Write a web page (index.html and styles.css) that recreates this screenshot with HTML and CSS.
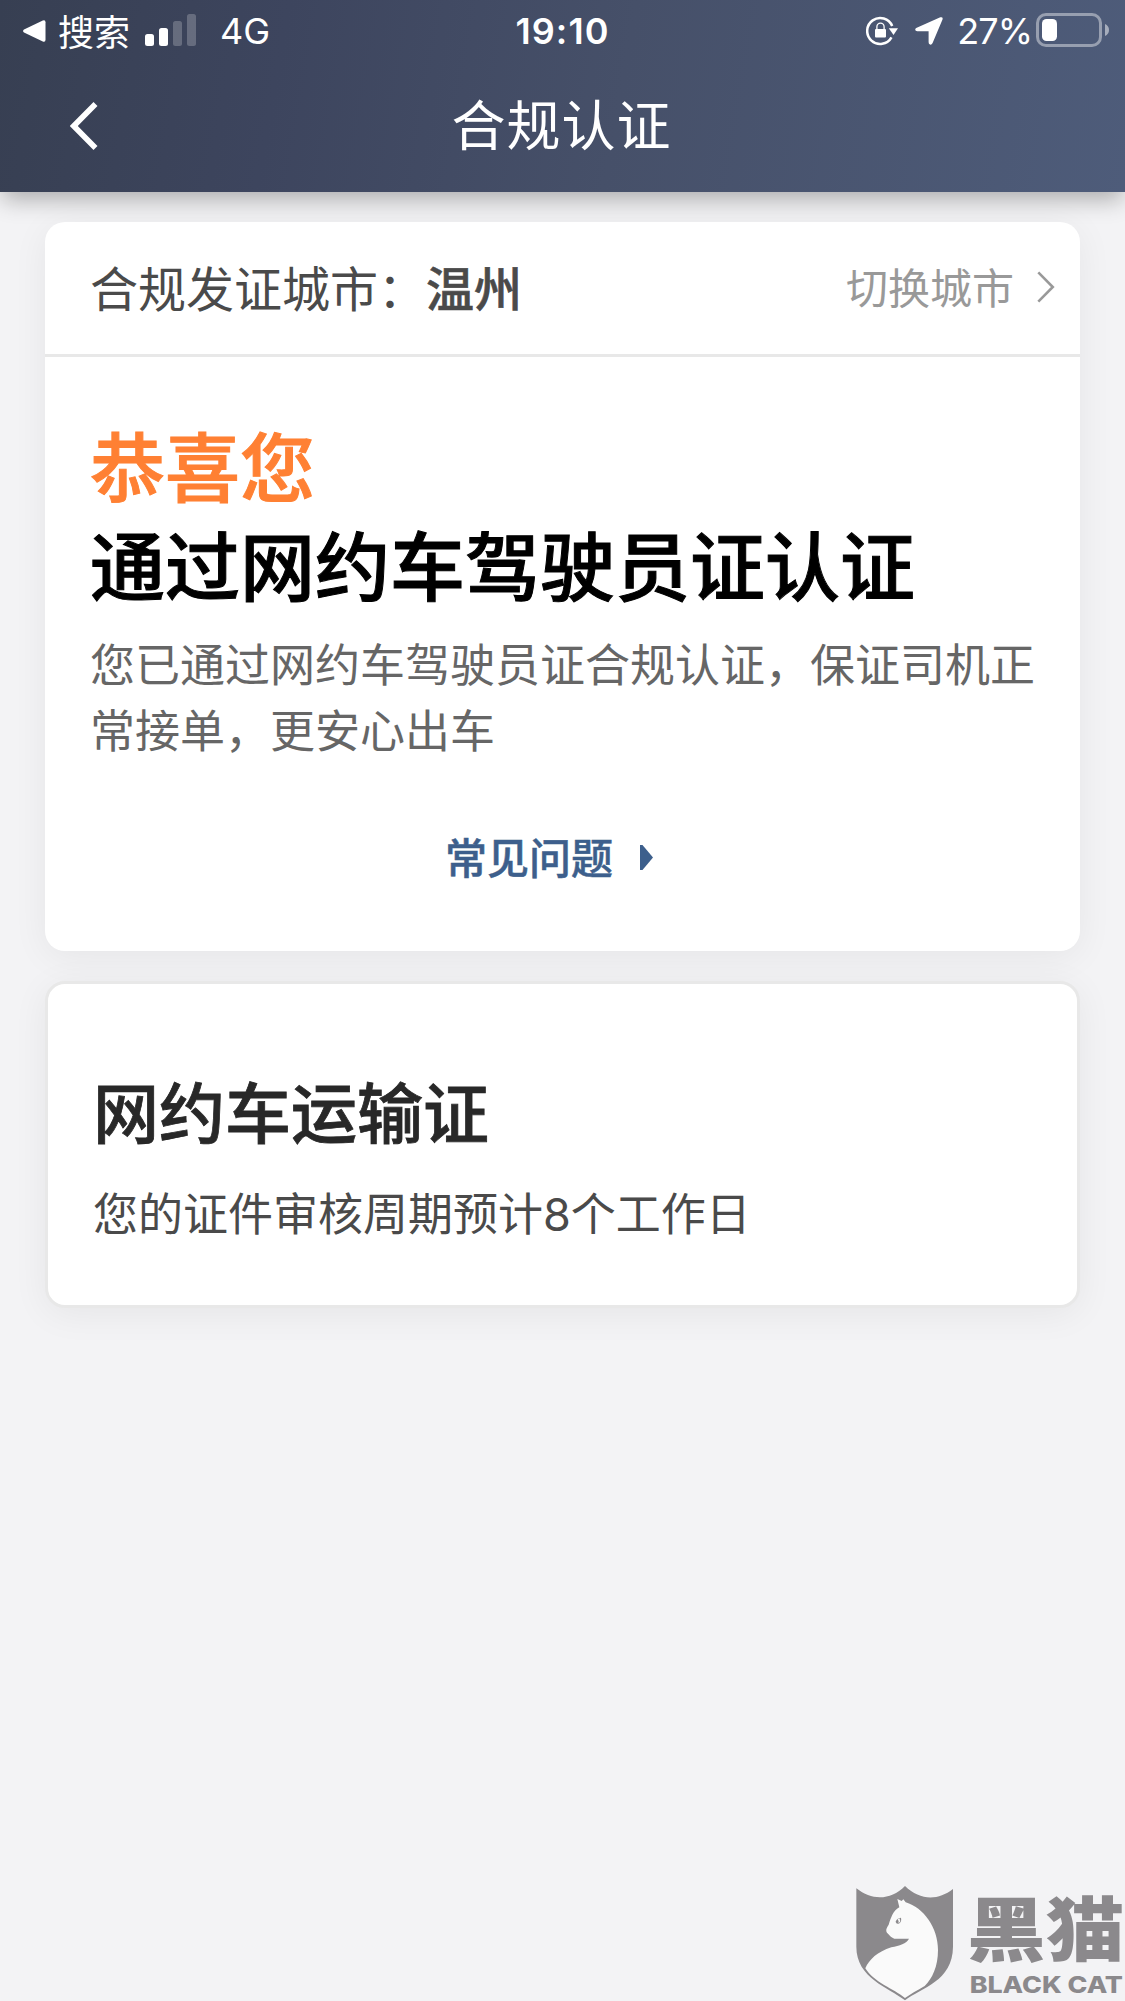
FILE: index.html
```html
<!DOCTYPE html>
<html lang="zh-CN">
<head>
<meta charset="utf-8">
<title>合规认证</title>
<link rel="stylesheet" href="styles.css">
</head>
<body>
<div class="screen">
  <header class="header">
    <div class="status">
      <div class="status-left">
        <svg class="return" width="23" height="22" viewBox="0 0 23 22"><path d="M1 9.6 19.8.4Q22.5-.6 22.5 2.2v17.6q0 2.8-2.7 1.8L1 12.4Q-.9 11 1 9.6Z" fill="#fff"/></svg>
        <span class="search">搜索</span>
        <svg class="signal" width="51" height="32" viewBox="0 0 51 32" fill="#fff"><rect y="20" width="9" height="12" rx="2.5"/><rect x="14" y="14" width="9" height="18" rx="2.5"/><g opacity=".22"><rect x="28" y="7" width="9" height="25" rx="2.5"/><rect x="42" width="9" height="32" rx="2.5"/></g></svg>
        <span class="network">4G</span>
      </div>
      <time class="time">19:10</time>
      <div class="status-right">
        <svg width="32" height="30" viewBox="0 0 32 30"><path d="M26.2 10A13 13 0 1 0 25.5 21.4" fill="none" stroke="#fff" stroke-width="2.5"/><path d="M22.8 12.3h9.2l-4.5 6.6Z" fill="#fff"/><rect x="9" y="13" width="11" height="8.5" rx="1" fill="#fff"/><path d="M10.9 13.5v-2.8a3.6 3.6 0 0 1 7.2 0v2.8" fill="none" stroke="#fff" stroke-width="1.3"/></svg>
        <svg class="location" width="28" height="28" viewBox="0 0 28 28"><path d="M1.2 11.1 25.3.3Q28.3-.4 27.5 2.6L17.6 26q-1 2-2.6 1.6-1.4-.5-1.4-2.4V14.3H2.3Q.2 14.1.2 12.6q0-1 1-1.5Z" fill="#fff"/></svg>
        <span class="percent">27%</span>
        <svg class="battery" width="73" height="34" viewBox="0 0 73 34"><rect x="1.5" y="1.5" width="63" height="31" rx="8.5" fill="none" stroke="#fff" stroke-opacity=".42" stroke-width="3"/><rect x="6" y="6" width="15" height="22" rx="4.5" fill="#fff"/><path d="M69 11q4 1.8 4 6t-4 6Z" fill="#fff" opacity=".5"/></svg>
      </div>
    </div>
    <nav class="nav">
      <svg class="back" width="28" height="48" viewBox="0 0 28 48"><path d="M25.5 2 3.8 24l21.7 22" fill="none" stroke="#fff" stroke-width="5.6"/></svg>
      <h1 class="nav-title">合规认证</h1>
    </nav>
  </header>
  <main class="content">
    <section class="card">
      <div class="city-row">
        <p class="city">合规发证城市：<strong class="city-name">温州</strong></p>
        <a class="switch">切换城市<svg width="18" height="32" viewBox="0 0 18 32"><path d="M1.3 1.3 15.8 16 1.3 30.7" fill="none" stroke="#999" stroke-width="2.6"/></svg></a>
      </div>
      <div class="result">
        <h2 class="headline"><span class="congrats">恭喜您</span><br>通过网约车驾驶员证认证</h2>
        <p class="detail">您已通过网约车驾驶员证合规认证，保证司机正常接单，更安心出车</p>
        <a class="faq">常见问题<svg width="13" height="25" viewBox="0 0 13 25"><path d="M0 0h2.5L13 12.5 2.5 25H0Z" fill="#3d5f8c"/></svg></a>
      </div>
    </section>
    <section class="card permit">
      <h2 class="permit-title">网约车运输证</h2>
      <p class="permit-detail">您的证件审核周期预计<span class="days">8</span>个工作日</p>
    </section>
  </main>
  <svg class="watermark" width="280" height="126" viewBox="0 0 840 378">
    <path d="M34 40C82 78 137 76 180 33C224 76 278 78 324 42V215C323 320 229 337 180 376C131 337 34 310 34 215Z" fill="#8b898c"/>
    <path d="M163 97 157 72 170 78 175 73 182 82C236 98 279 158 279 225C279 275 262 310 239 333C216 346 198 357 180 369C146 341 87 323 61 280C72 254 98 230 139 217C164 211 184 207 192 191C174 192 161 191 148 191C137 187 134 180 126 173C121 164 126 157 131 149C138 129 143 108 163 97Z" fill="#fafafa"/>
    <path d="M152 140Q155 130 168 128Q171 142 160 146Q153 147 152 140Z" fill="#8b898c"/><path d="M158 133q5 6 2 11l5-3q2-5-2-11Z" fill="#fafafa"/>
    <text class="wm-cn" x="366" y="243" textLength="472" lengthAdjust="spacingAndGlyphs">黑猫</text>
    <text class="wm-en" x="374" y="355" textLength="460" lengthAdjust="spacingAndGlyphs">BLACK CAT</text>
  </svg>
</div>
</body>
</html>
```
FILE: styles.css
```css
* { box-sizing: border-box; }
body, h1, h2, p { margin: 0; }
body {
  background: #f3f3f5;
  font-family: "Noto Sans CJK SC", sans-serif;
}
svg { display: block; flex: none; }
.screen {
  position: relative;
  width: 1125px;
  height: 2001px;
  overflow: hidden;
}
.header {
  height: 192px;
  color: #fff;
  background: linear-gradient(100deg, #373f52 0%, #3d455e 25%, #465069 55%, #4e5c7a 100%);
  box-shadow: 0 9px 22px -2px rgba(0, 0, 0, .3);
}
.status {
  display: grid;
  grid-template-columns: 1fr auto 1fr;
  align-items: center;
  height: 62px;
  padding: 0 16px 0 23px;
}
.status-left, .status-right { display: flex; align-items: center; }
.status-right { justify-content: flex-end; }
.search {
  margin: -3px 0 0 12px;
  font-size: 36px;
  font-weight: 400;
  line-height: 58px;
}
.signal { margin: -2px 0 0 15px; }
.network, .time, .percent {
  font-family: Inter, sans-serif;
  font-size: 36px;
  line-height: 62px;
}
.network { margin-left: 24px; }
.time {
  margin-right: 7px;
  font-weight: 600;
  letter-spacing: 1.1px;
}
.location { margin: -1px 14px 0 17px; }
.percent { letter-spacing: -1px; }
.battery { margin: -2px 0 0 4px; }
.nav {
  display: grid;
  grid-template-columns: 60px 1fr 60px;
  align-items: center;
  height: 130px;
  padding: 0 69px 0 67px;
}
.back { margin: 0 0 8px 3px; }
.nav-title {
  height: 136px;
  font-size: 54px;
  font-weight: 400;
  line-height: 122px;
  letter-spacing: 1px;
  text-align: center;
}
.content {
  display: flex;
  flex-direction: column;
  gap: 31px;
  padding: 30px 45px;
}
.card {
  background: #fff;
  border-radius: 20px;
  box-shadow: 0 6px 36px rgba(0, 0, 0, .06);
}
.city-row {
  display: flex;
  justify-content: space-between;
  height: 135px;
  padding: 0 25px 0 45px;
  border-bottom: 3px solid #e8e8e8;
}
.city {
  color: #4a4a4a;
  font-size: 48px;
  font-weight: 400;
  line-height: 129px;
}
.city-name {
  font-weight: 500;
  -webkit-text-stroke: .6px;
}
.switch {
  display: flex;
  align-items: center;
  gap: 23px;
  height: 128px;
  color: #999;
  font-size: 42px;
  font-weight: 400;
  line-height: 60px;
}
.switch svg { margin-top: 2px; }
.result {
  height: 594px;
  padding: 57px 45px 0;
}
.headline {
  color: #000;
  font-size: 75px;
  font-weight: 500;
  line-height: 99px;
  -webkit-text-stroke: 1px;
}
.congrats { color: #ff8033; }
.detail {
  margin-top: 18px;
  color: #666;
  font-size: 45px;
  font-weight: 400;
  line-height: 66px;
}
.faq {
  display: flex;
  justify-content: center;
  align-items: center;
  gap: 27px;
  height: 60px;
  margin-top: 63px;
  padding-right: 27px;
  color: #3d5f8c;
  font-size: 42px;
  font-weight: 500;
  -webkit-text-stroke: .5px;
}
.faq svg { margin-top: 5px; }
.permit {
  height: 327px;
  margin-top: -1px;
  padding: 75px 45px 0;
  border: 3px solid #e8e8e8;
}
.permit-title {
  color: #282828;
  font-size: 66px;
  font-weight: 500;
  line-height: 100px;
  -webkit-text-stroke: .8px;
}
.permit-detail {
  margin-top: 20px;
  color: #4a4a4a;
  font-size: 45px;
  font-weight: 400;
  line-height: 66px;
}
.days {
  font-family: Inter, sans-serif;
  font-weight: 400;
}
.watermark {
  position: absolute;
  right: 0;
  bottom: 0;
  overflow: visible;
  fill: #8b898c;
}
.wm-cn { font-size: 212px; font-weight: 900; }
.wm-en {
  font-family: Inter, sans-serif;
  font-size: 68px;
  font-weight: 800;
}
```
